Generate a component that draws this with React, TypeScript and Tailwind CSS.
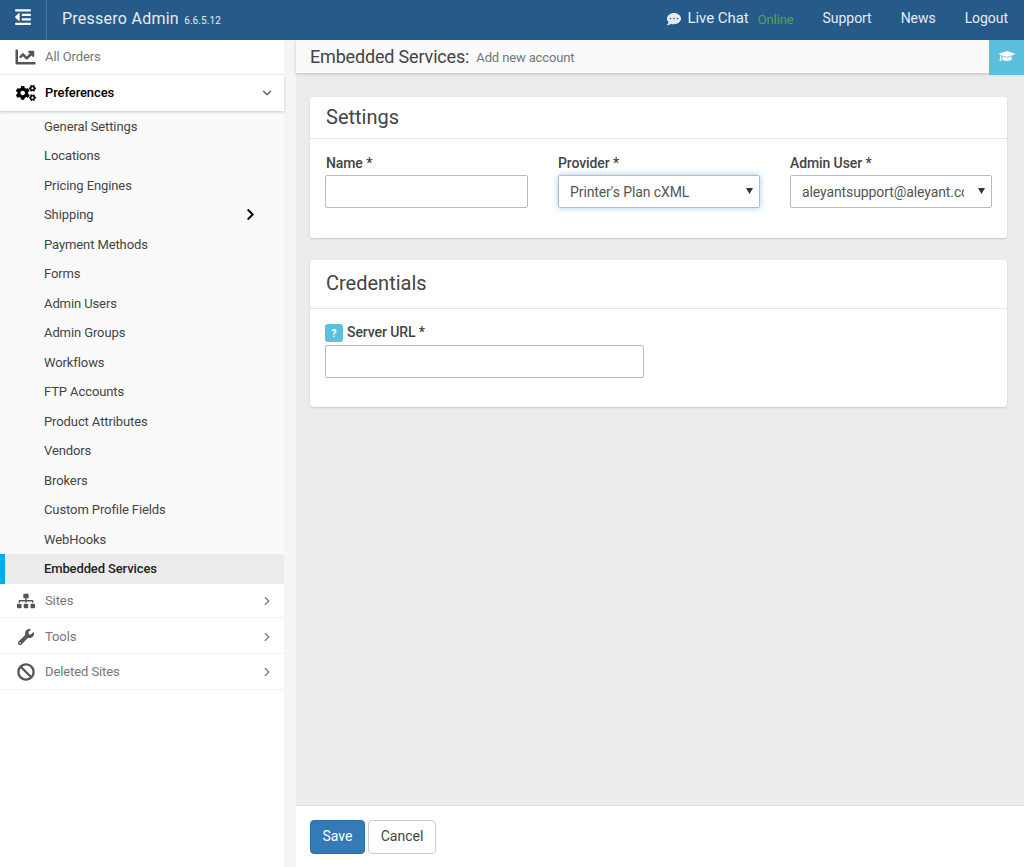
import React from "react";
import { FaOutdent, FaChartLine, FaCogs, FaSitemap, FaWrench, FaBan, FaCommentDots, FaGraduationCap, FaChevronRight } from "react-icons/fa";
import { LuChevronDown, LuChevronRight } from "react-icons/lu";

const subItems = ["General Settings","Locations","Pricing Engines","Shipping","Payment Methods","Forms","Admin Users","Admin Groups","Workflows","FTP Accounts","Product Attributes","Vendors","Brokers","Custom Profile Fields","WebHooks"];

function NavRow({ icon, label, h }: { icon: React.ReactNode; label: string; h: string }) {
  return (
    <div className={`flex items-center border-b border-[#f2f2f2] bg-white pl-[17px] pr-[10px] text-[#777] ${h}`}>
      <span className="flex w-[18px] justify-center text-[#555] text-[18px]">{icon}</span>
      <span className="ml-[10px] flex-1 text-[13px] tracking-[-0.1px]">{label}</span>
      <LuChevronRight className="text-[14px] text-[#777]" />
    </div>
  );
}

const inputCls = "block h-[33px] rounded-[2px] border border-[#bbb] bg-white text-[14px] tracking-[-0.1px] text-[#555] outline-none";
const labelCls = "block text-[14px] font-medium leading-[17px] tracking-[-0.1px] text-[#444]";

function Select({ value, focused }: { value: string; focused?: boolean }) {
  return (
    <div className="relative">
      <select
        defaultValue="v"
        className={`${inputCls} w-full appearance-none pl-[11px] pr-[27px] pt-[1px] ${focused ? "border-[#66afe9] shadow-[0_0_6px_rgba(102,175,233,0.6)]" : ""}`}
      >
        <option value="v">{value}</option>
      </select>
      <svg className="pointer-events-none absolute right-[7px] top-[13px] h-[6px] w-[7px]" viewBox="0 0 7 6">
        <path d="M0 0h7L3.5 6z" fill="#333" />
      </svg>
    </div>
  );
}

export default function App() {
  return (
    <div className="flex h-[867px] w-[1024px] flex-col overflow-hidden bg-[#ececec] font-['Roboto',sans-serif]">
      <header className="flex h-[40px] shrink-0 items-center bg-[#265a88] text-[#e6ecf2]">
        <div className="flex h-full w-[47px] items-center justify-center border-r border-[#4a769c] pb-[6px]">
          <FaOutdent className="text-[18px] text-white" />
        </div>
        <div className="mb-[3px] ml-[15px] text-[16px] tracking-[0.25px]">Pressero Admin <span className="ml-[1px] text-[10px] tracking-[0.1px]">6.6.5.12</span></div>
        <div className="mb-[3px] ml-auto flex items-center text-[14px] tracking-[-0.05px]">
          <FaCommentDots className="text-[14px]" />
          <span className="ml-[6px] text-[15px]">Live Chat</span>
          <span className="ml-[9px] mt-[2px] text-[13px] tracking-[-0.1px] text-[#4ba84f]">Online</span>
          <span className="ml-[29px]">Support</span>
          <span className="ml-[29px]">News</span>
          <span className="ml-[29px] mr-[16px]">Logout</span>
        </div>
      </header>
      <div className="flex min-h-0 flex-1">
        <aside className="flex w-[296px] shrink-0 bg-[#f5f5f5]">
          <nav className="h-full w-[284px] bg-white">
            <div className="flex h-[35px] items-center border-b border-[#f2f2f2] pl-[15px] text-[#777]">
              <FaChartLine className="w-[21px] text-[20px] text-[#555]" />
              <span className="ml-[9px] text-[13px] tracking-[-0.1px]">All Orders</span>
            </div>
            <div className="relative z-10 flex h-[36px] items-center pl-[16px] pr-[10px] text-black shadow-[0_1px_3px_rgba(0,0,0,0.2)]">
              <FaCogs className="w-[20px] text-[20px]" />
              <span className="ml-[9px] flex-1 text-[13px] font-medium tracking-[-0.1px]">Preferences</span>
              <LuChevronDown className="text-[14px] text-[#555]" />
            </div>
            <div className="bg-[#fafafa] pt-[0.5px]">
              {subItems.map((s) => (
                <div key={s} className="flex h-[29.5px] items-center pl-[44px] pr-[27px] text-[13px] tracking-[-0.1px] text-[#444]">
                  <span className="flex-1">{s}</span>
                  {s === "Shipping" && <FaChevronRight className="text-[13px] text-black" />}
                </div>
              ))}
              <div className="flex h-[30px] items-center border-l-[5px] border-[#00aeef] bg-[#ececec] pl-[39px] text-[13px] font-medium tracking-[-0.12px] text-[#222]">Embedded Services</div>
            </div>
            <NavRow icon={<FaSitemap />} label="Sites" h="h-[34px]" />
            <NavRow icon={<FaWrench className="text-[16px]" />} label="Tools" h="h-[36px] pt-[2px]" />
            <NavRow icon={<FaBan />} label="Deleted Sites" h="h-[36px]" />
          </nav>
        </aside>
        <main className="flex min-w-0 flex-1 flex-col">
          <div className="relative flex h-[33px] shrink-0 items-center bg-[#fafafa] pl-[14px] shadow-[0_1px_3px_rgba(0,0,0,0.2)]">
            <span className="text-[18px] tracking-[-0.17px] text-[#444]">Embedded Services:</span>
            <span className="ml-[7px] mt-[3px] text-[13px] tracking-[-0.13px] text-[#777]">Add new account</span>
            <div className="absolute right-0 top-0 flex h-[35px] w-[35px] items-center justify-center bg-[#5bc0de] pb-[3px] text-white">
              <FaGraduationCap className="text-[16px]" />
            </div>
          </div>
          <div className="flex-1 pl-[14px] pr-[17px] pt-[24px]">
            <section className="rounded-[3px] bg-white shadow-[0_1px_2px_rgba(0,0,0,0.15)]">
              <h2 className="flex h-[42px] items-center border-b border-[#e5e5e5] pb-[2px] pl-[16px] text-[20px] text-[#444]">Settings</h2>
              <div className="grid h-[99px] grid-cols-[203px_202px_202px] gap-x-[30px] px-[15px] pt-[16px]">
                <div>
                  <label className={`${labelCls} mb-[3px] pl-[1px]`}>Name *</label>
                  <input className={`${inputCls} w-full`} />
                </div>
                <div>
                  <label className={`${labelCls} mb-[3px]`}>Provider *</label>
                  <Select value="Printer's Plan cXML" focused />
                </div>
                <div>
                  <label className={`${labelCls} mb-[3px]`}>Admin User *</label>
                  <Select value="aleyantsupport@aleyant.com" />
                </div>
              </div>
            </section>
            <section className="mt-[22px] rounded-[3px] bg-white shadow-[0_1px_2px_rgba(0,0,0,0.15)]">
              <h2 className="flex h-[49px] items-center border-b border-[#e5e5e5] pb-[3px] pl-[16px] text-[20px] text-[#444]">Credentials</h2>
              <div className="h-[98px] pl-[15px] pt-[13px]">
                <label className="mb-[3px] flex items-center text-[14px] font-medium leading-[19px] tracking-[-0.1px] text-[#444]">
                  <span className="mr-[4px] mt-[2px] flex h-[18px] w-[18px] items-center justify-center rounded-[3px] bg-[#5bc0de] text-[10px] font-bold text-white">?</span>
                  Server URL *
                </label>
                <input className={`${inputCls} w-[319px]`} />
              </div>
            </section>
          </div>
          <footer className="flex h-[62px] shrink-0 items-center gap-[3px] border-t border-[#e3e3e3] bg-white pl-[14px]">
            <button className="h-[34px] w-[55px] rounded-[4px] border border-[#2e6da4] bg-[#337ab7] text-[14px] text-white">Save</button>
            <button className="h-[34px] w-[68px] rounded-[4px] border border-[#ccc] bg-white text-[14px] text-[#444]">Cancel</button>
          </footer>
        </main>
      </div>
    </div>
  );
}
